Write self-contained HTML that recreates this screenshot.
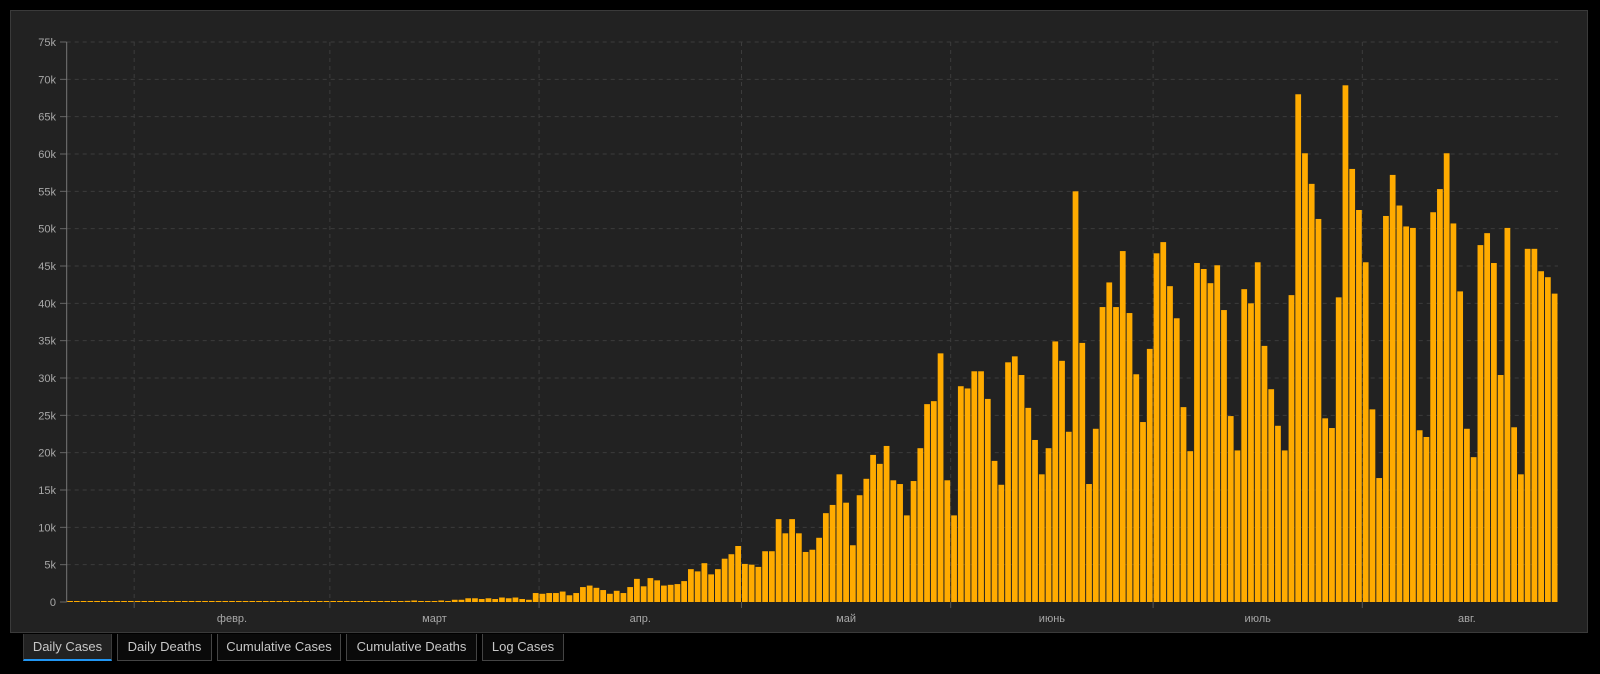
<!DOCTYPE html>
<html><head><meta charset="utf-8">
<style>
html,body{margin:0;padding:0;background:#000;width:1600px;height:674px;overflow:hidden;font-family:"Liberation Sans",sans-serif;}
#panel{position:absolute;left:10px;top:10px;width:1578px;height:623px;background:#222;border:1px solid #3a3a3a;box-sizing:border-box;}
svg{position:absolute;left:0;top:0;}
.tab{position:absolute;top:634px;height:27px;box-sizing:border-box;border:1px solid #444;border-top:none;background:#0a0a0a;color:#c8c8c8;font-size:13px;line-height:26px;text-align:center;}
.tab.active{background:#222;border-color:#3a3a3a;border-bottom:2px solid #2196f3;}
</style></head><body>
<div id="panel"></div>
<svg id="c" width="1600" height="674" xmlns="http://www.w3.org/2000/svg"></svg>
<div class="tab active" style="left:23px;width:89px">Daily Cases</div>
<div class="tab" style="left:117px;width:95px">Daily Deaths</div>
<div class="tab" style="left:217px;width:124px">Cumulative Cases</div>
<div class="tab" style="left:346px;width:131px">Cumulative Deaths</div>
<div class="tab" style="left:482px;width:82px">Log Cases</div>
<script>
var d=[];
for(var i=0;i<48;i++)d.push(0.03);
d=d.concat([0.05,0.1,0.15,0.2,0.1,0.05,0.1,0.2,0.1,0.3,0.3,0.5,0.5,0.4,0.5,0.4,0.6,0.5,0.6,0.4,0.3,
1.2,1.1,1.2,1.2,1.4,0.9,1.2,2.0,2.2,1.9,1.6,1.1,1.5,1.2,2.0,3.1,2.1,3.2,2.9,2.2,2.3,2.4,2.8,4.4,4.1,
5.2,3.7,4.4,5.8,6.4,7.5,5.1,5.0,4.7,6.8,6.8,11.1,9.2,11.1,9.2,6.7,7.0,8.6,11.9,13.0,17.1,13.3,7.6,14.3,16.5,19.7,18.5,20.9,16.3,15.8,11.6,16.2,20.6,26.5,26.9,33.3,16.3,11.6,28.9,28.6,30.9,30.9,27.2,18.9,15.7,32.1,32.9,30.4,26.0,21.7,17.1,20.6,34.9,32.3,22.8,55.0,34.7,15.8,23.2,
39.5,42.8,39.5,47.0,38.7,30.5,24.1,33.9,46.7,48.2,42.3,38.0,26.1,20.2,45.4,44.6,42.7,45.1,39.1,24.9,20.3,41.9,40.0,45.5,34.3,28.5,23.6,20.3,41.1,68.0,60.1,56.0,51.3,24.6,23.3,40.8,69.2,58.0,52.5,45.5,25.8,16.6,51.7,57.2,53.1,50.3,50.1,23.0,22.1,52.2,55.3,60.1,50.7,41.6,23.2,19.4,47.8,49.4,45.4,30.4,50.1,23.4,17.1,47.3,47.3,44.3,43.5,41.3]);
var X0=66.7,X1=1558,Y0=602,YT=42,p=(X1-X0)/221,k=(Y0-YT)/75;
var s='';
// horizontal grid + labels
for(var v=0;v<=75;v+=5){var y=Y0-v*k;
 if(v>0)s+='<line x1="'+X0+'" x2="'+X1+'" y1="'+y+'" y2="'+y+'" stroke="#3c3c3c" stroke-dasharray="4,4"/>';
 s+='<line x1="60" x2="'+X0+'" y1="'+y+'" y2="'+y+'" stroke="#666"/>';
 s+='<text x="56" y="'+(y+4)+'" fill="#a8a8a8" font-size="11" text-anchor="end" font-family="Liberation Sans,sans-serif">'+(v?v+'k':'0')+'</text>';}
var ticks=[10,39,70,100,131,161,192],names=['февр.','март','апр.','май','июнь','июль','авг.'];
for(var j=0;j<ticks.length;j++){var x=X0+ticks[j]*p;
 s+='<line x1="'+x+'" x2="'+x+'" y1="'+YT+'" y2="'+Y0+'" stroke="#3c3c3c" stroke-dasharray="4,4"/>';
 s+='<line x1="'+x+'" x2="'+x+'" y1="'+Y0+'" y2="'+(Y0+6)+'" stroke="#555"/>';
 var nx=(j<ticks.length-1?X0+ticks[j+1]*p:x+31*p);
 s+='<text x="'+((x+nx)/2)+'" y="622" fill="#a8a8a8" font-size="11" text-anchor="middle" font-family="Liberation Sans,Noto Sans CJK SC,sans-serif">'+names[j]+'</text>';}
s+='<line x1="'+X0+'" x2="'+X0+'" y1="'+YT+'" y2="'+Y0+'" stroke="#777"/>';
for(var i=0;i<d.length;i++){var h=Math.max(1,d[i]*k);
 s+='<rect x="'+(X0+i*p+0.5)+'" y="'+(Y0-h)+'" width="'+(p-1)+'" height="'+h+'" fill="#ffab00"/>';}
document.getElementById('c').innerHTML=s;
</script>
</body></html>
